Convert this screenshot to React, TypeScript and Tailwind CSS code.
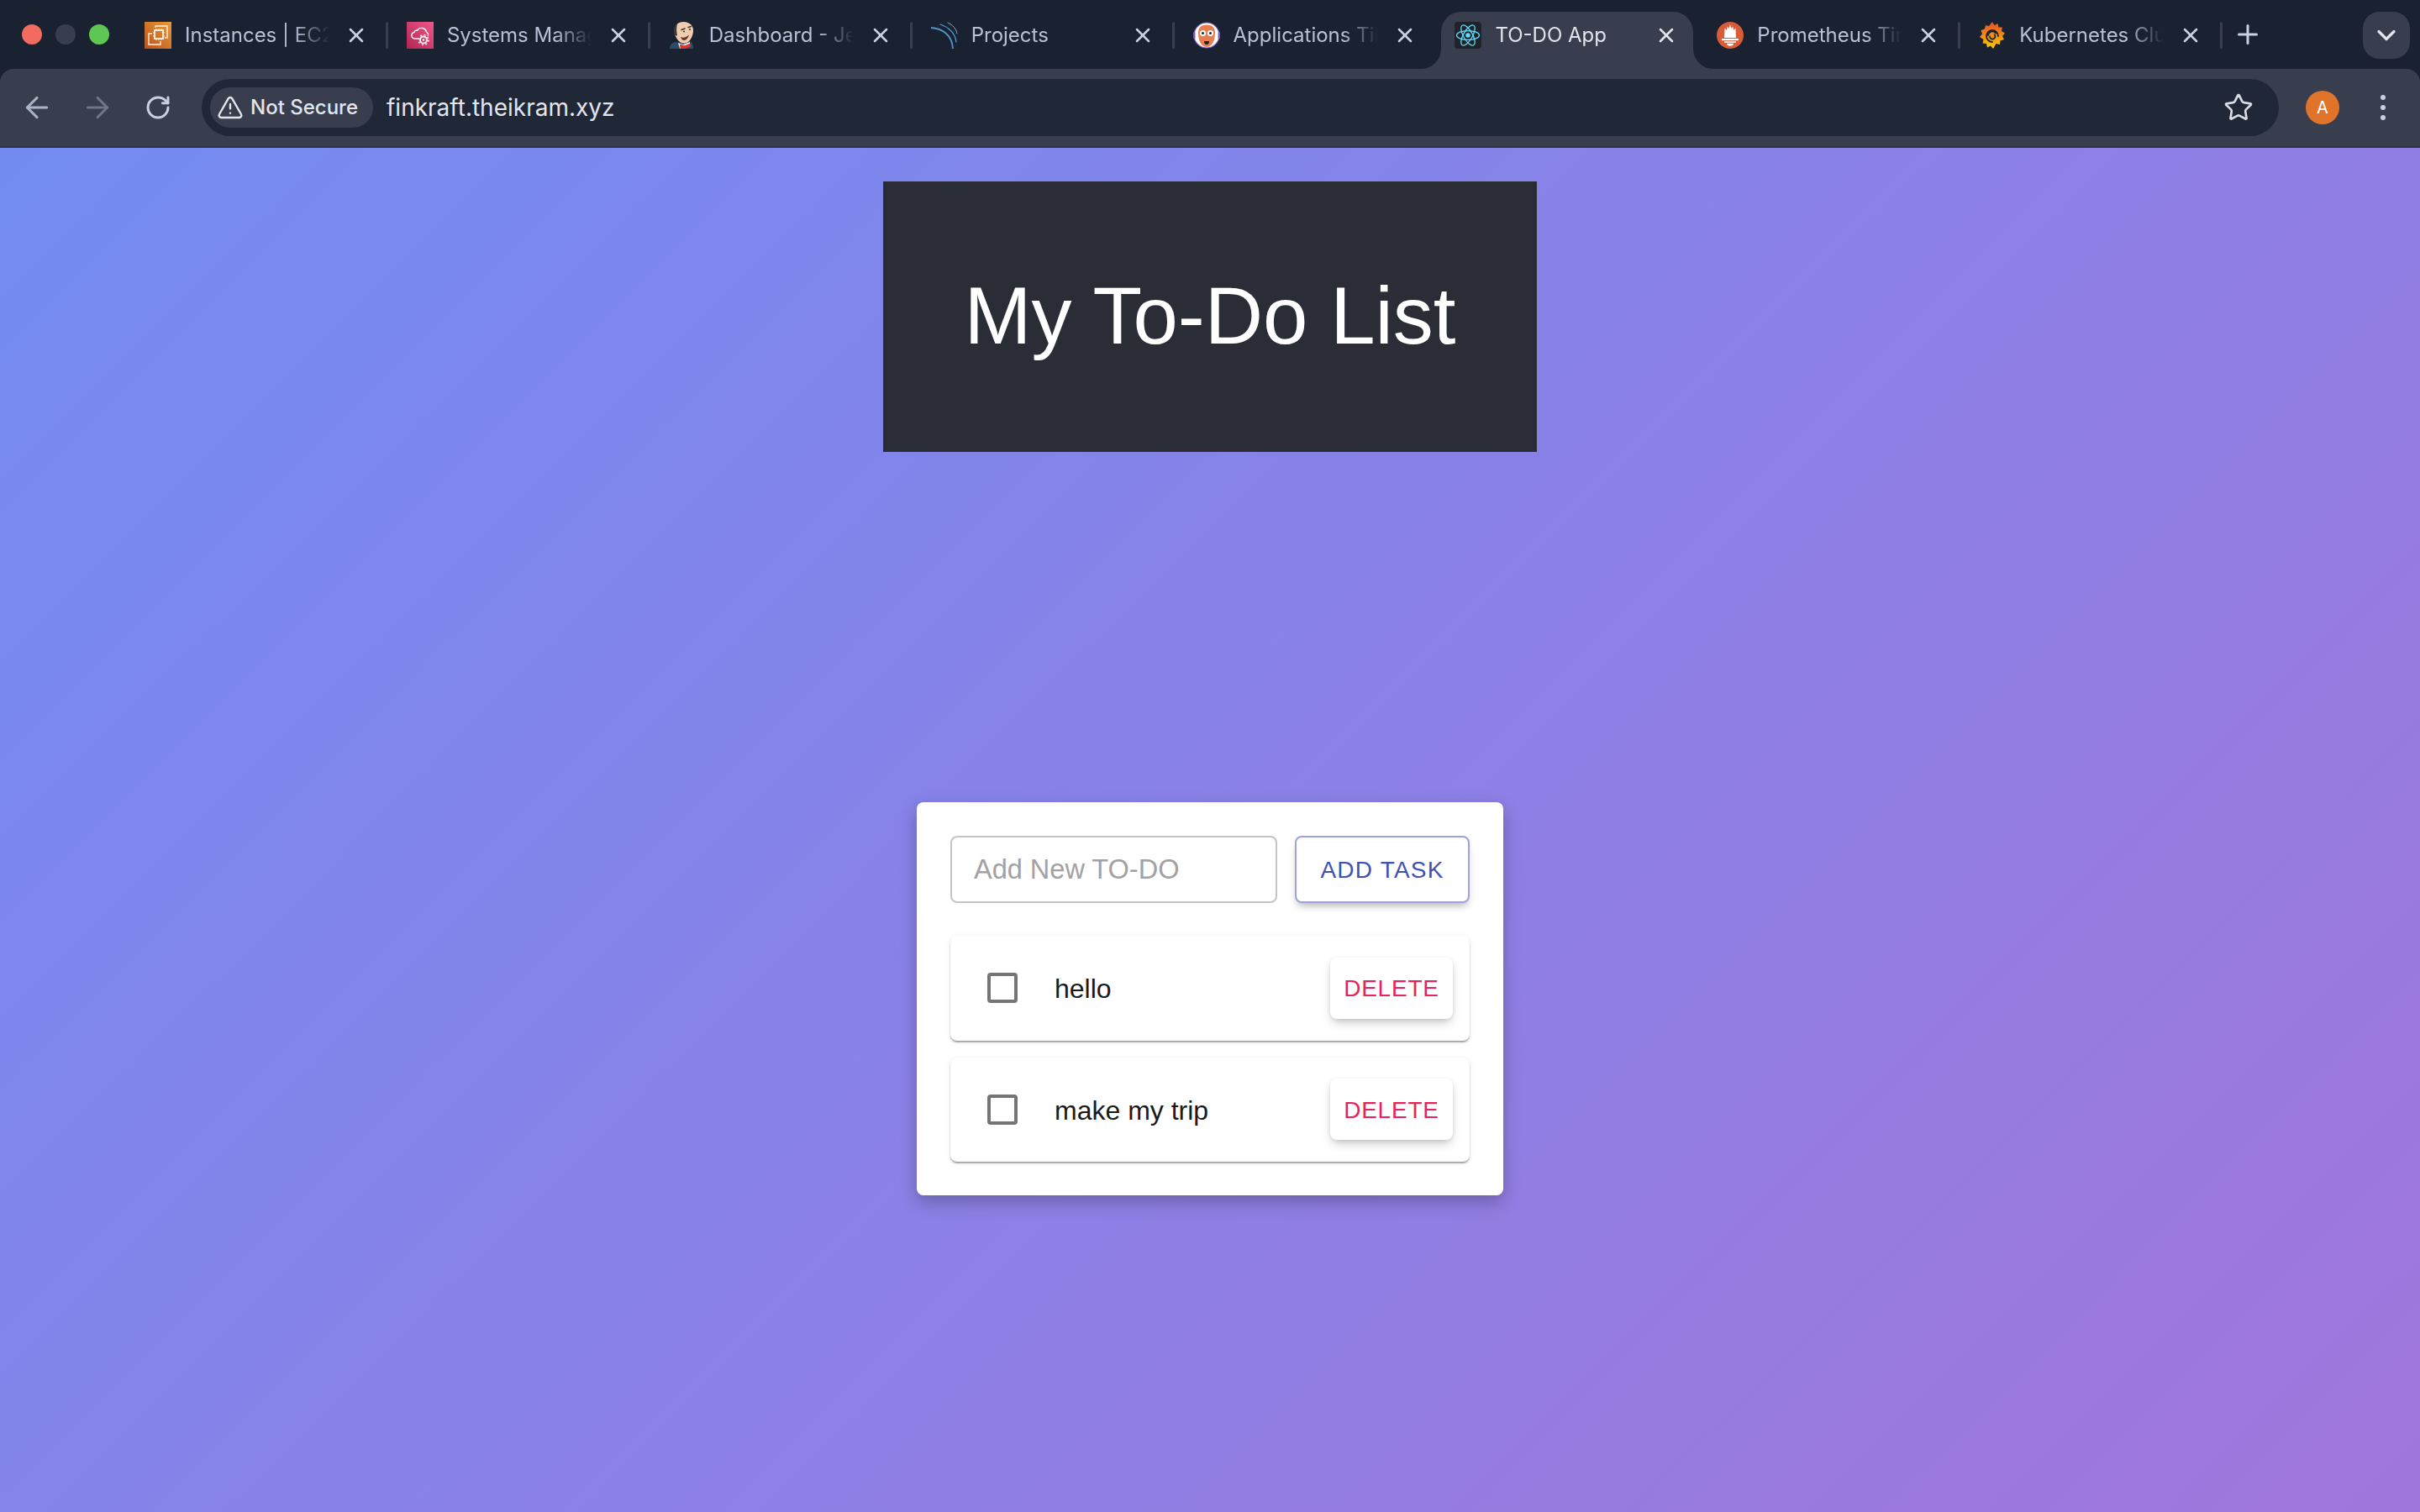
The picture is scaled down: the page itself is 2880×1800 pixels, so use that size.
import React from 'react';
import { ArrowLeft, ArrowRight, ChevronDown, Plus, RotateCw, Star, TriangleAlert, X } from 'lucide-react';

// --- favicons ---
const Ec2Icon = () => (
  <svg viewBox="0 0 32 32" className="w-8 h-8">
    <defs>
      <linearGradient id="ec2" x1="0" y1="1" x2="1" y2="0">
        <stop offset="0" stopColor="#b9531f" />
        <stop offset="1" stopColor="#ec9a34" />
      </linearGradient>
    </defs>
    <rect width="32" height="32" fill="url(#ec2)" />
    <g fill="none" stroke="#fbeee0" strokeWidth="1.4">
      <path d="M13 7V5h14v14h-3" />
      <path d="M9 14H5v13h14v-4" />
      <rect x="12" y="10" width="10" height="10" strokeWidth="2" />
      <path d="M14 8v2M17 8v2M20 8v2M14 20v2M17 20v2M20 20v2M10 13h2M10 17h2M22 13h2M22 17h2" strokeWidth="1" />
    </g>
  </svg>
);

const SsmIcon = () => (
  <svg viewBox="0 0 32 32" className="w-8 h-8">
    <defs>
      <linearGradient id="ssm" x1="0" y1="1" x2="1" y2="0">
        <stop offset="0" stopColor="#b0244f" />
        <stop offset="1" stopColor="#f0588c" />
      </linearGradient>
    </defs>
    <rect width="32" height="32" fill="url(#ssm)" />
    <path d="M13 20H9.500a3.800 3.800 0 0 1-.7-7.500 3.300 3.300 0 0 1 3.800-2.300A6 6 0 0 1 23.500 12a4 4 0 0 1 2 4" fill="none" stroke="#fff" strokeWidth="1.400" strokeLinecap="round" />
    <circle cx="20" cy="21.500" r="4" fill="none" stroke="#fff" strokeWidth="1.800" />
    <circle cx="20" cy="21.500" r="6" fill="none" stroke="#fff" strokeWidth="1.500" strokeDasharray="2 2.700" />
    <circle cx="20" cy="21.500" r="1.300" fill="#fff" />
  </svg>
);

const JenkinsIcon = () => (
  <svg viewBox="0 0 32 32" className="w-8 h-8">
    <path d="M1 32c0-4 2-7 7-8l8 1 9-2c3 1 4 5 4 9z" fill="#2f4a66" />
    <path d="M11 25l6 2 8-3v4l-7 4h-5z" fill="#f3efe6" />
    <path d="M13 26.500l5.500 1.800v3.500l-5 .2zM26 25.500l-7.500 2.800v3.700l7-2z" fill="#d33833" />
    <path d="M6.500 11C6 4.500 11 0 17.500 0 25 0 29.500 5 29 11c-.5 6.500-4 14-10.500 14.500C12 26 7 18 6.500 11z" fill="#efcdb0" />
    <path d="M6.500 16C5 10 6 5 10 2.500 8.800 7 9 11.500 10 16.500z" fill="#3a3a3a" />
    <path d="M14 18c3 1.500 7 .5 10-2.500-1 4-3.500 6.500-6 6.500-2 0-3.500-2-4-4z" fill="#6b3b2a" />
    <path d="M15 9.500l4-1.500M23 6.500l3.500-1" stroke="#4a3528" strokeWidth="1.500" strokeLinecap="round" />
    <circle cx="18" cy="11.500" r="1" fill="#2a2a2a" />
    <circle cx="25" cy="9" r="1" fill="#2a2a2a" />
  </svg>
);

const ArcsIcon = () => (
  <svg viewBox="0 0 32 32" className="w-8 h-8" fill="none" strokeLinecap="round">
    <path d="M0 7c13 1 25 8 26 25" stroke="#4f96cf" strokeWidth="1.800" />
    <path d="M11 3c9 3 18 10 19 21" stroke="#4f96cf" strokeWidth="1.300" />
    <path d="M20 1c6 3 10 7 11 13" stroke="#7fa9c9" strokeWidth="1" />
  </svg>
);

const ArgoIcon = () => (
  <svg viewBox="0 0 32 32" className="w-8 h-8">
    <circle cx="16" cy="16" r="15" fill="#fff" stroke="#7b5fb5" strokeWidth="1.200" />
    <rect x="0" y="12" width="2.500" height="8" rx="1" fill="#7b5fb5" />
    <rect x="29.500" y="12" width="2.500" height="8" rx="1" fill="#7b5fb5" />
    <path d="M6 13C6 6.500 10 3.500 16 3.500S26 6.500 26 13c0 8-3 17-10 17S6 21 6 13z" fill="#e77e4f" />
    <circle cx="11.500" cy="13.500" r="3.600" fill="#fff" />
    <circle cx="20.500" cy="13.500" r="3.600" fill="#fff" />
    <circle cx="11.500" cy="13.500" r="1.500" fill="#222" />
    <circle cx="20.500" cy="13.500" r="1.500" fill="#222" />
    <path d="M13 23h6c0 3-1.500 4-3 4s-3-1-3-4z" fill="#1d1d1d" />
  </svg>
);

const ReactIcon = () => (
  <svg viewBox="0 0 32 32" className="w-8 h-8">
    <rect width="32" height="32" rx="4" fill="#20232a" />
    <circle cx="16" cy="16" r="2.800" fill="#61dafb" />
    <g fill="none" stroke="#61dafb" strokeWidth="1.300">
      <ellipse cx="16" cy="16" rx="13.500" ry="5.400" />
      <ellipse cx="16" cy="16" rx="13.500" ry="5.400" transform="rotate(60 16 16)" />
      <ellipse cx="16" cy="16" rx="13.500" ry="5.400" transform="rotate(120 16 16)" />
    </g>
  </svg>
);

const PrometheusIcon = () => (
  <svg viewBox="0 0 32 32" className="w-8 h-8">
    <circle cx="16" cy="16" r="16" fill="#da5b36" />
    <path d="M16 3l1.500 5 1.800-2.500.8 4.500 2.400-2.500.5 11.500H9l.5-11.500L11.900 10l.8-4.500L14.500 8z" fill="#fff" />
    <rect x="6" y="20" width="20" height="2.200" fill="#fff" />
    <rect x="9" y="23.200" width="14" height="1.600" fill="#fff" />
    <path d="M12 25.800h8a4 3 0 0 1-8 0z" fill="#fff" />
  </svg>
);

const GrafanaIcon = () => (
  <svg viewBox="0 0 32 32" className="w-8 h-8">
    <defs>
      <linearGradient id="graf" x1="0" y1="1" x2="0" y2="0">
        <stop offset="0" stopColor="#fbca0a" />
        <stop offset="1" stopColor="#e4501f" />
      </linearGradient>
    </defs>
    <path d="M16 0l2.500 4 4-2 1 4.500 4.500 0-1 4.500 4 2.500-3 3.500 2 4-4.500 1.500-.5 4.500-4.500-1L17 32l-3-3.500-4 2-1-4.500-4.500-.5 1-4.500L1 18l3-3.500L2.500 10 7 8.500 8 4l4 1z" fill="url(#graf)" />
    <path d="M23 17a7 7 0 1 0-7 7M11 16a5 5 0 0 1 9 -2.500M13 17.500a3.200 3.200 0 1 0 5.800-2" fill="none" stroke="#1a2232" strokeWidth="1.800" strokeLinecap="round" />
  </svg>
);

const tabs = [
  { title: 'Instances | EC2 Instance', icon: <Ec2Icon /> },
  { title: 'Systems Manager', icon: <SsmIcon /> },
  { title: 'Dashboard - Jenkins', icon: <JenkinsIcon /> },
  { title: 'Projects', icon: <ArcsIcon /> },
  { title: 'Applications Tiles', icon: <ArgoIcon /> },
  { title: 'TO-DO App', icon: <ReactIcon />, active: true },
  { title: 'Prometheus Time', icon: <PrometheusIcon /> },
  { title: 'Kubernetes Cluster', icon: <GrafanaIcon /> },
];

const Tab = ({ title, icon, active, hideSep }: { title: string; icon: React.ReactNode; active?: boolean; hideSep?: boolean }) => (
  <div className="relative w-[311.9px] h-[68px] shrink-0">
    {active && (
      <div className="absolute inset-y-0 left-[6px] right-[6px] bg-[#383e4e] rounded-t-[24px]">
        <div className="absolute left-[-24px] bottom-0 w-6 h-6 bg-[#383e4e]">
          <div className="w-full h-full bg-[#1a2232] rounded-br-[24px]" />
        </div>
        <div className="absolute right-[-24px] bottom-0 w-6 h-6 bg-[#383e4e]">
          <div className="w-full h-full bg-[#1a2232] rounded-bl-[24px]" />
        </div>
      </div>
    )}
    <div className="relative flex items-center h-[56px] pl-[22px]">
      <div className="w-8 h-8 shrink-0">{icon}</div>
      <span
        className={`ml-4 w-[172px] overflow-hidden whitespace-nowrap text-[24px] [mask-image:linear-gradient(to_right,black_75%,transparent_100%)] ${
          active ? 'text-[#e3e5ec]' : 'text-[#b7c0d4]'
        }`}
      >
        {title}
      </span>
      <X className={`ml-[18px] w-7 h-7 shrink-0 ${active ? 'text-[#e3e5ec]' : 'text-[#c9d0df]'}`} strokeWidth={2.2} />
    </div>
    {!active && !hideSep && <div className="absolute right-0 top-[12px] w-[3px] h-8 rounded-full bg-[#383e4e]" />}
  </div>
);

const BrowserChrome = () => (
  <div className="shrink-0 bg-[#1a2232]">
    {/* tab strip */}
    <div className="relative flex h-[82px] pt-[14px]">
      <div className="flex items-center w-[150px] h-[54px] pl-[26px] gap-4 shrink-0">
        <div className="w-6 h-6 rounded-full bg-[#f26a60]" />
        <div className="w-6 h-6 rounded-full bg-[#383e4e]" />
        <div className="w-6 h-6 rounded-full bg-[#5fc653]" />
      </div>
      {tabs.map((t, i) => (
        <Tab key={t.title} title={t.title} icon={t.icon} active={t.active} hideSep={i === 4} />
      ))}
      <div className="flex items-center h-[54px] pl-3">
        <Plus className="w-9 h-9 text-[#c9d0df]" strokeWidth={2} />
      </div>
      <div className="ml-auto mr-3 flex items-center justify-center w-[56px] h-[56px] rounded-[20px] bg-[#383e4e]">
        <ChevronDown className="w-9 h-9 text-[#e3e5ec]" strokeWidth={2.2} />
      </div>
    </div>
    {/* toolbar */}
    <div className="flex items-center h-[94px] bg-[#383e4e] rounded-t-[16px] border-b-2 border-[#2f3443]">
      <div className="flex items-center w-[240px] shrink-0 pl-6 gap-8">
        <ArrowLeft className="w-10 h-10 text-[#a9b3c9]" strokeWidth={1.8} />
        <ArrowRight className="w-10 h-10 text-[#6f7585]" strokeWidth={1.8} />
        <RotateCw className="ml-1 w-8 h-8 text-[#c9d0df]" strokeWidth={2.2} />
      </div>
      <div className="flex items-center w-[2472px] h-[68px] rounded-full bg-[#202737] pl-[10px]">
        <div className="flex items-center h-12 w-[194px] rounded-full bg-[#383e4e] pl-2">
          <TriangleAlert className="w-8 h-8 text-[#e3e5ec]" strokeWidth={1.8} />
          <span className="ml-2 text-[24px] font-medium text-[#e3e5ec] whitespace-nowrap">Not Secure</span>
        </div>
        <span className="ml-4 text-[28px] text-[#e3e5ec] whitespace-nowrap">finkraft.theikram.xyz</span>
        <Star className="ml-auto mr-[30px] w-9 h-9 text-[#d8dbe3]" strokeWidth={1.8} />
      </div>
      <div className="ml-[32px] flex items-center justify-center w-10 h-10 rounded-full bg-[#e0742a] text-[20px] text-white">A</div>
      <div className="ml-[49px] flex flex-col gap-[6px]">
        <div className="w-[6px] h-[6px] rounded-full bg-[#c9d0df]" />
        <div className="w-[6px] h-[6px] rounded-full bg-[#c9d0df]" />
        <div className="w-[6px] h-[6px] rounded-full bg-[#c9d0df]" />
      </div>
    </div>
  </div>
);

const TodoItem = ({ text }: { text: string }) => (
  <li className="flex items-center h-[124.5px] pl-[44px] pr-5 rounded-lg bg-white shadow-[0_2px_2px_-1px_rgba(0,0,0,0.3),0_2px_2px_0_rgba(0,0,0,0.2),0_1px_6px_0_rgba(0,0,0,0.08)]">
    <input type="checkbox" className="appearance-none w-9 h-9 border-[4px] border-[#757575] rounded-[4px]" />
    <span className="ml-[44px] pt-[2px] text-[32px] text-[#1a1a1a]">{text}</span>
    <button className="ml-auto w-[146px] h-[73px] pt-[2px] rounded-lg bg-white text-[28px] tracking-[0.8px] text-[#e6245c] shadow-[0_6px_12px_-2px_rgba(0,0,0,0.22),0_1px_4px_rgba(0,0,0,0.08)]">
      DELETE
    </button>
  </li>
);

export default function App() {
  return (
    <div className="flex flex-col h-screen min-h-[1800px] font-['Liberation_Sans',Arial,sans-serif] bg-[linear-gradient(135deg,#718cf2,#a176dc)]">
      <div className="font-['Inter',sans-serif]">
        <BrowserChrome />
      </div>

      <main className="flex flex-col items-center">
        <header className="mt-10 flex items-center justify-center w-[778px] h-[322px] pb-[2px] bg-[#2a2d36]">
          <h1 className="text-[96px] text-white font-normal">My To-Do List</h1>
        </header>

        <section className="mt-[417px] w-[698px] h-[468px] p-10 rounded-lg bg-white shadow-[0_8px_20px_rgba(0,0,0,0.25)]">
          <div className="flex gap-[21px]">
            <input
              placeholder="Add New TO-DO"
              className="w-[389px] h-20 px-[26px] border-2 border-[#c4c4c4] rounded-lg text-[32.5px] placeholder:text-[#a2a2a2]"
            />
            <button className="w-[208px] h-20 pt-[1px] border-2 border-[#9aa3de] rounded-lg bg-white text-[28px] tracking-[1.2px] text-[#3f51b5] shadow-[0_6px_10px_-3px_rgba(0,0,0,0.3)]">
              ADD TASK
            </button>
          </div>
          <ul className="mt-[39px] flex flex-col gap-5">
            <TodoItem text="hello" />
            <TodoItem text="make my trip" />
          </ul>
        </section>
      </main>
    </div>
  );
}
